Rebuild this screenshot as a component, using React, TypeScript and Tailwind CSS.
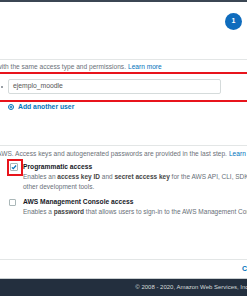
import React from "react";

export default function App() {
  const font = { fontFamily: '"Liberation Sans", Arial, sans-serif' };
  return (
    <div
      className="w-[247px] h-[296px] overflow-hidden bg-white flex flex-col text-[#545b64]"
      style={font}
    >
      <div className="h-[2px] bg-[#3b4653] shrink-0" />
      {/* step indicator area */}
      <div className="h-[57px] shrink-0 flex justify-end pr-[5px] pt-[11px]">
        <div className="w-[17px] h-[17px] rounded-full bg-[#0f6cbd] text-white text-[7px] font-bold flex items-center justify-center">
          1
        </div>
      </div>
      <div className="h-px bg-[#e3e6e6] shrink-0" />
      <div className="h-[12px] shrink-0 flex items-center whitespace-nowrap text-[6.6px] text-[#6b7178] ml-[-3px] pt-[1px]">
        <span>with the same access type and permissions.</span>
        <span className="text-[#0073bb] ml-[2px]">Learn more</span>
      </div>
      {/* red annotated input row */}
      <div className="h-[30px] shrink-0 border-y-2 border-[#e8141c] flex items-center pl-[8px] pr-[26px] relative">
        <div className="absolute left-[1px] top-[12px] w-[2px] h-[2px] bg-[#9aa0a6]" />
        <div className="flex-1 h-[15px] border border-[#d5dbdb] rounded-[2px] flex items-center pl-[4px] text-[6.8px] text-[#555] mt-[-1px]">
          ejemplo_moodle
        </div>
      </div>
      <div className="h-[8px] shrink-0 flex items-center pl-[8px] gap-[4px] mt-[1px]">
        <svg width="6" height="6" viewBox="0 0 12 12">
          <circle cx="6" cy="6" r="5" fill="none" stroke="#0073bb" strokeWidth="2" />
          <path d="M6 3.3v5.4M3.3 6h5.4" stroke="#0073bb" strokeWidth="2" />
        </svg>
        <span className="text-[6.8px] font-bold text-[#0073bb] whitespace-nowrap">Add another user</span>
      </div>
      <div className="h-[34px] shrink-0" />
      <div className="h-px bg-[#e3e6e6] shrink-0" />
      <div className="h-[14px] shrink-0 flex items-center whitespace-nowrap text-[6.6px] text-[#6b7178] ml-[-3px] pt-[1px]">
        <span>AWS. Access keys and autogenerated passwords are provided in the last step.</span>
        <span className="text-[#0073bb] ml-[2px]">Learn more</span>
      </div>
      {/* programmatic access */}
      <div className="shrink-0 flex mt-[-1px]">
        <div className="w-[23px] shrink-0 relative h-[17px]">
          <div className="absolute left-[7px] top-0 w-[16px] h-[17px] border-2 border-[#e8141c]" />
          <div className="absolute left-[10px] top-[4px] w-[8px] h-[8px] border border-[#aab7b8] rounded-[1px] bg-white flex items-center justify-center">
            <svg width="6" height="6" viewBox="0 0 10 10">
              <path d="M1.5 5.5l2.3 2.3L8.5 2.5" fill="none" stroke="#0073bb" strokeWidth="2" />
            </svg>
          </div>
        </div>
        <div className="flex flex-col whitespace-nowrap pt-[3px]">
          <div className="text-[6.7px] font-bold text-[#16191f] leading-[10px]">Programmatic access</div>
          <div className="text-[6.5px] leading-[10px] text-[#687078]">
            Enables an <b className="text-[#444]">access key ID</b> and <b className="text-[#444]">secret access key</b> for the AWS API, CLI, SDK, and
          </div>
          <div className="text-[6.5px] leading-[10px] text-[#687078]">other development tools.</div>
        </div>
      </div>
      {/* console access */}
      <div className="shrink-0 flex mt-[5px]">
        <div className="w-[23px] shrink-0 relative h-[12px]">
          <div className="absolute left-[9px] top-[2px] w-[7px] h-[7px] border border-[#aab7b8] rounded-[1px] bg-white" />
        </div>
        <div className="flex flex-col whitespace-nowrap">
          <div className="text-[6.7px] font-bold text-[#16191f] leading-[10px]">AWS Management Console access</div>
          <div className="text-[6.5px] leading-[10px] text-[#687078]">
            Enables a <b className="text-[#444]">password</b> that allows users to sign-in to the AWS Management Console.
          </div>
        </div>
      </div>
      <div className="flex-1" />
      <div className="h-px bg-[#e3e6e6] shrink-0" />
      <div className="h-[18px] shrink-0 flex items-center justify-end overflow-hidden whitespace-nowrap">
        <span className="text-[7px] font-bold text-[#0073bb] mr-[-18px]">Cancel</span>
      </div>
      <div className="h-px bg-[#c9cfd1] shrink-0" />
      <div className="h-[17px] shrink-0 bg-[#232f3e] flex items-center justify-end overflow-hidden whitespace-nowrap">
        <span className="text-[6px] text-[#d5dbdb] mr-[-3px]">© 2008 - 2020, Amazon Web Services, Inc.</span>
      </div>
    </div>
  );
}
